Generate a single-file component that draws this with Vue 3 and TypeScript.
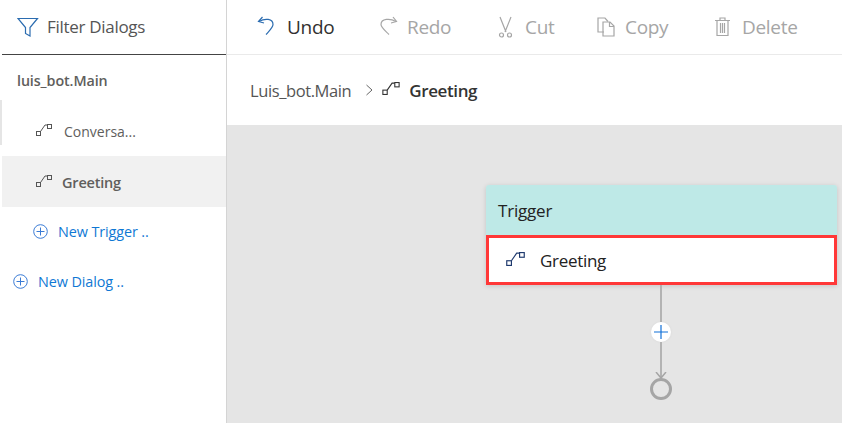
<script setup lang="ts">
const actions = [
  { label: 'Undo', icon: 'undo', on: true, w: 120 },
  { label: 'Redo', icon: 'redo', on: false, w: 118 },
  { label: 'Cut', icon: 'cut', on: false, w: 100 },
  { label: 'Copy', icon: 'copy', on: false, w: 117 },
  { label: 'Delete', icon: 'del', on: false, w: 110 },
]
</script>

<template>
  <div class="app">
    <div class="strip"><i></i></div>
    <aside class="side">
      <div class="filter">
        <svg width="22" height="20" viewBox="0 0 22 20" fill="none" stroke="#2b6cb0" stroke-width="1.2"><path d="M1 1.500h19.500L13 10.500v8.500l-4.500-2.500v-6z" /></svg>
        <span>Filter Dialogs</span>
      </div>
      <div class="root">luis_bot.Main</div>
      <div class="row"><svg class="tri" viewBox="0 0 16 12" fill="none" stroke="#555" width="16" height="12"><rect x="0.500" y="7.500" width="4" height="4" /><path d="M4.500 7.500 9 1h2.500" /><rect x="11.500" y="0.500" width="4" height="4" /></svg><span class="conv">Conversa...</span></div>
      <div class="row active"><svg class="tri" viewBox="0 0 16 12" fill="none" stroke="#555" width="16" height="12"><rect x="0.500" y="7.500" width="4" height="4" /><path d="M4.500 7.500 9 1h2.500" /><rect x="11.500" y="0.500" width="4" height="4" /></svg><span class="greet">Greeting</span></div>
      <div class="new trig"><svg width="15" height="15" viewBox="0 0 15 15" fill="none" stroke="#3a7bd5"><circle cx="7.500" cy="7.500" r="6.800" /><path d="M3.500 7.500h8M7.500 3.500v8" /></svg><span>New Trigger ..</span></div>
      <div class="new dlg"><svg width="15" height="15" viewBox="0 0 15 15" fill="none" stroke="#3a7bd5"><circle cx="7.500" cy="7.500" r="6.800" /><path d="M3.500 7.500h8M7.500 3.500v8" /></svg><span>New Dialog ..</span></div>
    </aside>
    <main class="main">
      <div class="toolbar">
        <div v-for="a in actions" :key="a.label" class="act" :class="{ on: a.on }" :style="{ width: a.w + 'px' }">
          <svg width="22" height="24" viewBox="0 0 22 24" fill="none" :stroke="a.on ? '#2b6cb0' : '#a6a6a6'" stroke-width="1.200">
            <template v-if="a.icon === 'undo'"><path d="M5.500 2 1.500 6.500 7 8" /><path d="M2 6.500C8 3 16 3.500 16 9.500c0 3-3 5.500-7 10" /></template>
            <template v-else-if="a.icon === 'redo'"><path d="M16 2l3.500 4.500L14 8" /><path d="M19 6.500C13 3 4 3.500 4 9.500c0 3 4 6 8 10" /></template>
            <template v-else-if="a.icon === 'cut'"><path d="M5 2l6 15M16 2l-6 15" /><circle cx="6.500" cy="20" r="2" /><circle cx="14.500" cy="20" r="2" /></template>
            <template v-else-if="a.icon === 'copy'"><path d="M9 17H3V3h7l3 3.500" /><path d="M8 7h7l4 4v10H8z" /><path d="M14.500 7v4.500H19" /></template>
            <template v-else><path d="M3 5.500h15M8 5.500V3h5v2.500" /><path d="M5 5.500v15h11v-15" /><path d="M8.500 8v10M10.500 8v10M12.500 8v10" /></template>
          </svg>
          <span>{{ a.label }}</span>
        </div>
      </div>
      <div class="crumbs">
        <span class="c1">Luis_bot.Main</span>
        <svg width="9" height="12" viewBox="0 0 9 12" fill="none" stroke="#666"><path d="M1.500 1 7 6 1.500 11" /></svg>
        <svg class="ci" width="18" height="13" viewBox="0 0 16 12" fill="none" stroke="#333"><rect x="0.500" y="7.500" width="4" height="4" /><path d="M4.500 7.500 9 1h2.500" /><rect x="11.500" y="0.500" width="4" height="4" /></svg>
        <b>Greeting</b>
      </div>
      <div class="canvas">
        <div class="flow">
          <div class="card">
            <div class="head">Trigger</div>
            <div class="body">
              <svg width="19" height="14" viewBox="0 0 16 12" fill="none" stroke="#1f3a6e"><rect x="0.500" y="7.500" width="4" height="4" /><path d="M4.500 7.500 9 1h2.500" /><rect x="11.500" y="0.500" width="4" height="4" /></svg>
              <span>Greeting</span>
            </div>
          </div>
          <div class="link">
            <div class="line l1"></div>
            <div class="plus"><svg width="14" height="14" viewBox="0 0 14 14"><path d="M0 7h14M7 0v14" stroke="#1170d8" stroke-width="1.200" /></svg></div>
            <div class="line l2"></div>
            <svg class="end" width="24" height="30" viewBox="0 0 24 30" fill="none" stroke="#a5a5a5"><path d="M7 0l5 6 5-6" stroke-width="1.500" /><circle cx="12" cy="17" r="9.500" stroke-width="3" /></svg>
          </div>
        </div>
      </div>
    </main>
  </div>
</template>

<style>
html, body { margin: 0; background: #fff; }
</style>

<style scoped>
.app { width: 842px; height: 423px; display: flex; overflow: hidden; font-family: "Open Sans", "Noto Sans", sans-serif; color: #333; }
.strip { width: 2px; flex: none; padding-top: 100px; box-sizing: border-box; }
.strip i { display: block; height: 45px; background: #e5e5e5; }
.side { width: 224px; flex: none; border-right: 1px solid #d4d4d4; background: #fff; }
.filter { height: 55px; box-sizing: border-box; border-bottom: 1px solid #444; display: flex; align-items: center; gap: 8px; padding: 0 0 1px 15px; font-size: 17px; letter-spacing: -0.3px; color: #555; }
.root { height: 50px; box-sizing: border-box; padding: 16px 0 0 15px; font-size: 14.300px; font-weight: 600; color: #605e5c; letter-spacing: -0.1px; }
.row { height: 51px; box-sizing: border-box; display: flex; align-items: center; padding: 1px 0 0 34px; font-size: 14px; color: #605e5c; }
.row .tri { margin: -2px 12px 0 0; }
.active { background: #f1f1f1; }
.row .greet { font-weight: 600; margin-left: -2px; font-size: 14.500px; letter-spacing: -0.2px; }
.new { height: 50px; box-sizing: border-box; display: flex; align-items: center; gap: 10px; font-size: 14.400px; color: #0f78d4; letter-spacing: -0.1px; padding-bottom: 2px; }
.trig { padding-left: 31px; }
.dlg { padding-left: 11px; }
.main { flex: 1; min-width: 0; display: flex; flex-direction: column; }
.toolbar { height: 55px; box-sizing: border-box; border-bottom: 1px solid #eaeaea; display: flex; align-items: center; padding-left: 30px; }
.act { display: flex; align-items: center; gap: 8px; font-size: 19px; letter-spacing: -0.3px; color: #a6a6a6; flex: none; }
.act.on { color: #323130; }
.crumbs { height: 70px; display: flex; align-items: center; padding-left: 23px; font-size: 16.500px; letter-spacing: -0.4px; color: #555; gap: 7px; }
.crumbs .c1 { margin-right: 7px; }
.crumbs .ci { margin-left: 1px; margin-top: -3px; }
.crumbs b { font-weight: 600; font-size: 17px; color: #333; margin-left: 2px; }
.canvas { flex: 1; background: #e5e5e5; padding: 60px 0 0 259px; }
.flow { width: 350px; }
.card { width: 351px; box-shadow: 0 1px 5px rgba(0,0,0,.14); border-radius: 3px 3px 0 0; }
.head { height: 50px; background: #bee9e7; display: flex; align-items: center; padding-left: 12px; font-size: 17px; color: #222; letter-spacing: -0.2px; border-radius: 3px 3px 0 0; }
.body { height: 50px; box-sizing: border-box; border: 3px solid #ff3838; background: #fff; display: flex; align-items: center; gap: 15px; padding: 1px 0 0 17px; font-size: 17px; letter-spacing: -0.3px; color: #222; }
.body svg { margin-top: -3px; }
.link { display: flex; flex-direction: column; align-items: center; }
.line { width: 2px; background: #b3b3b3; }
.l1 { height: 37px; }
.l2 { height: 36px; }
.plus { width: 20px; height: 20px; border-radius: 50%; background: #fff; display: flex; align-items: center; justify-content: center; box-shadow: 0 0 3px rgba(0,0,0,.06); }
.end { margin-top: -6px; }
</style>
